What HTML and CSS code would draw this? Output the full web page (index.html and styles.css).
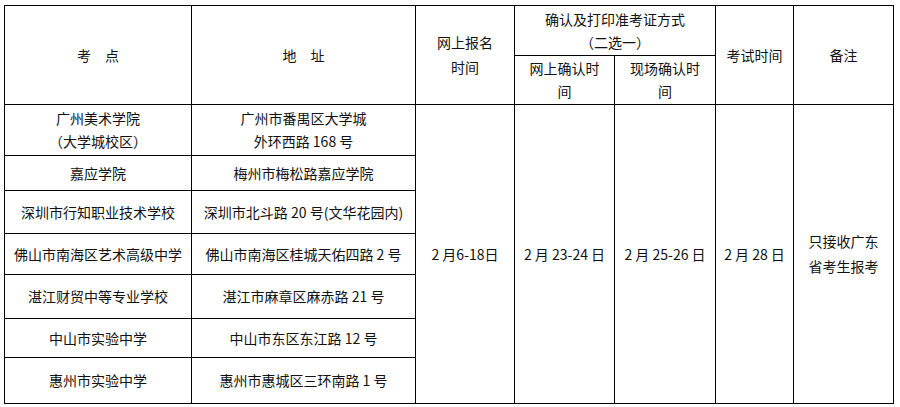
FILE: index.html
```html
<!DOCTYPE html>
<html lang="zh-CN">
<head>
<meta charset="utf-8">
<title>考点安排</title>
<link rel="stylesheet" href="styles.css">
</head>
<body>
<table class="schedule">
  <colgroup>
    <col class="c-site">
    <col class="c-addr">
    <col class="c-reg">
    <col class="c-online">
    <col class="c-onsite">
    <col class="c-exam">
    <col class="c-note">
  </colgroup>
  <thead>
    <tr class="h1">
      <th rowspan="2">考　点</th>
      <th rowspan="2">地　址</th>
      <th rowspan="2">网上报名<br>时间</th>
      <th colspan="2" class="tight">确认及打印准考证方式<br>（二选一）</th>
      <th rowspan="2">考试时间</th>
      <th rowspan="2">备注</th>
    </tr>
    <tr class="h2">
      <th class="tight">网上确认时<br>间</th>
      <th class="tight">现场确认时<br>间</th>
    </tr>
  </thead>
  <tbody>
    <tr class="r1">
      <td class="tight">广州美术学院<br>（大学城校区）</td>
      <td class="tight">广州市番禺区大学城<br>外环西路 168 号</td>
      <td rowspan="7">2 月6-18日</td>
      <td rowspan="7">2 月 23-24 日</td>
      <td rowspan="7">2 月 25-26 日</td>
      <td rowspan="7">2 月 28 日</td>
      <td rowspan="7">只接收广东<br>省考生报考</td>
    </tr>
    <tr class="r2">
      <td>嘉应学院</td>
      <td>梅州市梅松路嘉应学院</td>
    </tr>
    <tr class="r3">
      <td>深圳市行知职业技术学校</td>
      <td>深圳市北斗路 20 号(文华花园内)</td>
    </tr>
    <tr class="r4">
      <td>佛山市南海区艺术高级中学</td>
      <td>佛山市南海区桂城天佑四路 2 号</td>
    </tr>
    <tr class="r5">
      <td>湛江财贸中等专业学校</td>
      <td>湛江市麻章区麻赤路 21 号</td>
    </tr>
    <tr class="r6">
      <td>中山市实验中学</td>
      <td>中山市东区东江路 12 号</td>
    </tr>
    <tr class="r7">
      <td>惠州市实验中学</td>
      <td>惠州市惠城区三环南路 1 号</td>
    </tr>
  </tbody>
</table>
</body>
</html>
```

FILE: styles.css
```css
html, body {
  margin: 0;
  padding: 0;
  background: #ffffff;
}

body {
  padding: 5px 0 0 4px;
  font-family: "Noto Sans CJK SC", "Noto Sans", sans-serif;
  font-size: 14px;
  color: #111111;
}

.schedule {
  border-collapse: collapse;
  table-layout: fixed;
  width: 889px;
}

.schedule th,
.schedule td {
  border: 1px solid #000000;
  padding: 0;
  text-align: center;
  vertical-align: middle;
  font-weight: normal;
  line-height: 25px;
  white-space: nowrap;
}

.schedule .tight {
  line-height: 23px;
}

.c-site { width: 187px; }
.c-addr { width: 224px; }
.c-reg { width: 99px; }
.c-online { width: 100px; }
.c-onsite { width: 101px; }
.c-exam { width: 78px; }
.c-note { width: 100px; }

.h1 { height: 50px; }
.h2 { height: 49px; }
.r1 { height: 51px; }
.r2 { height: 35px; }
.r3 { height: 43px; }
.r4 { height: 41px; }
.r5 { height: 44px; }
.r6 { height: 39px; }
.r7 { height: 46px; }
```
